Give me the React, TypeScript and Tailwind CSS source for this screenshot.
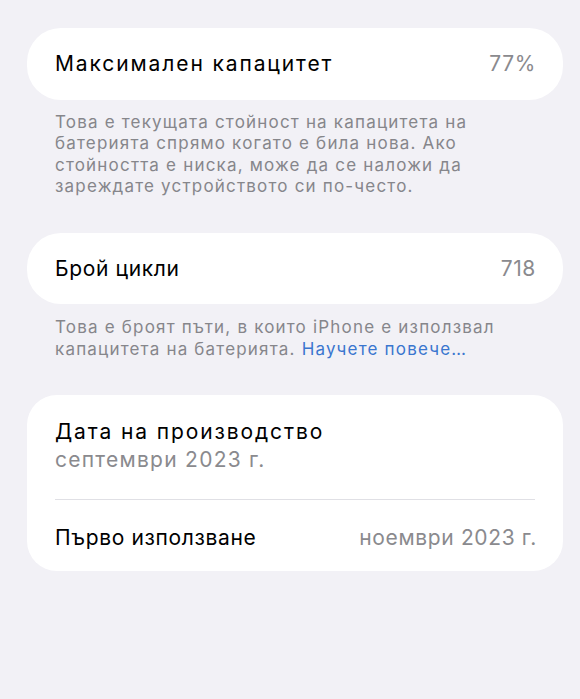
import React from "react";

export default function App() {
  return (
    <div
      lang="bg"
      className="min-h-[699px] w-[580px] bg-[#f2f1f6] pl-[27px] pr-[17px] pt-[28px] font-['Inter',sans-serif] tracking-[0.04em] text-black"
    >
      <div className="flex h-[72px] items-center justify-between rounded-[34px] bg-white pl-[28px] pr-[27px] text-[21px] leading-[26px]">
        <span className="tracking-[0.09em]">Максимален капацитет</span>
        <span className="text-[#8a8a8e]">77%</span>
      </div>
      <p className="mt-[12px] px-[28px] text-[17px] leading-[21.33px] tracking-[0.07em] text-[#86868b]">
        Това е текущата стойност на капацитета на
        <br />
        батерията спрямо когато е била нова. Ако
        <br />
        стойността е ниска, може да се наложи да
        <br />
        зареждате устройството си по-често.
      </p>

      <div className="mt-[36px] flex h-[71px] items-center justify-between rounded-[34px] bg-white pl-[28px] pr-[27px] text-[21px] leading-[26px]">
        <span>Брой цикли</span>
        <span className="text-[#8a8a8e]">718</span>
      </div>
      <p className="mt-[13px] px-[28px] text-[17px] leading-[21.33px] tracking-[0.07em] text-[#86868b]">
        Това е броят пъти, в които iPhone е използвал
        <br />
        капацитета на батерията.{" "}
        <span className="text-[#3a76cf]">Научете повече…</span>
      </p>

      <div className="mt-[35px] rounded-[30px] bg-white px-[28px] text-[21px] leading-[26px]">
        <div className="pb-[26px] pt-[24px]">
          <div className="tracking-[0.09em]">Дата на производство</div>
          <div className="mt-[2px] tracking-[0.06em] text-[#8a8a8e]">септември 2023 г.</div>
        </div>
        <div className="h-px bg-[#e0e0e5]" />
        <div className="flex h-[71px] items-center justify-between pt-[6px]">
          <span>Първо използване</span>
          <span className="-mr-[2px] text-[#8a8a8e]">ноември 2023 г.</span>
        </div>
      </div>
    </div>
  );
}
